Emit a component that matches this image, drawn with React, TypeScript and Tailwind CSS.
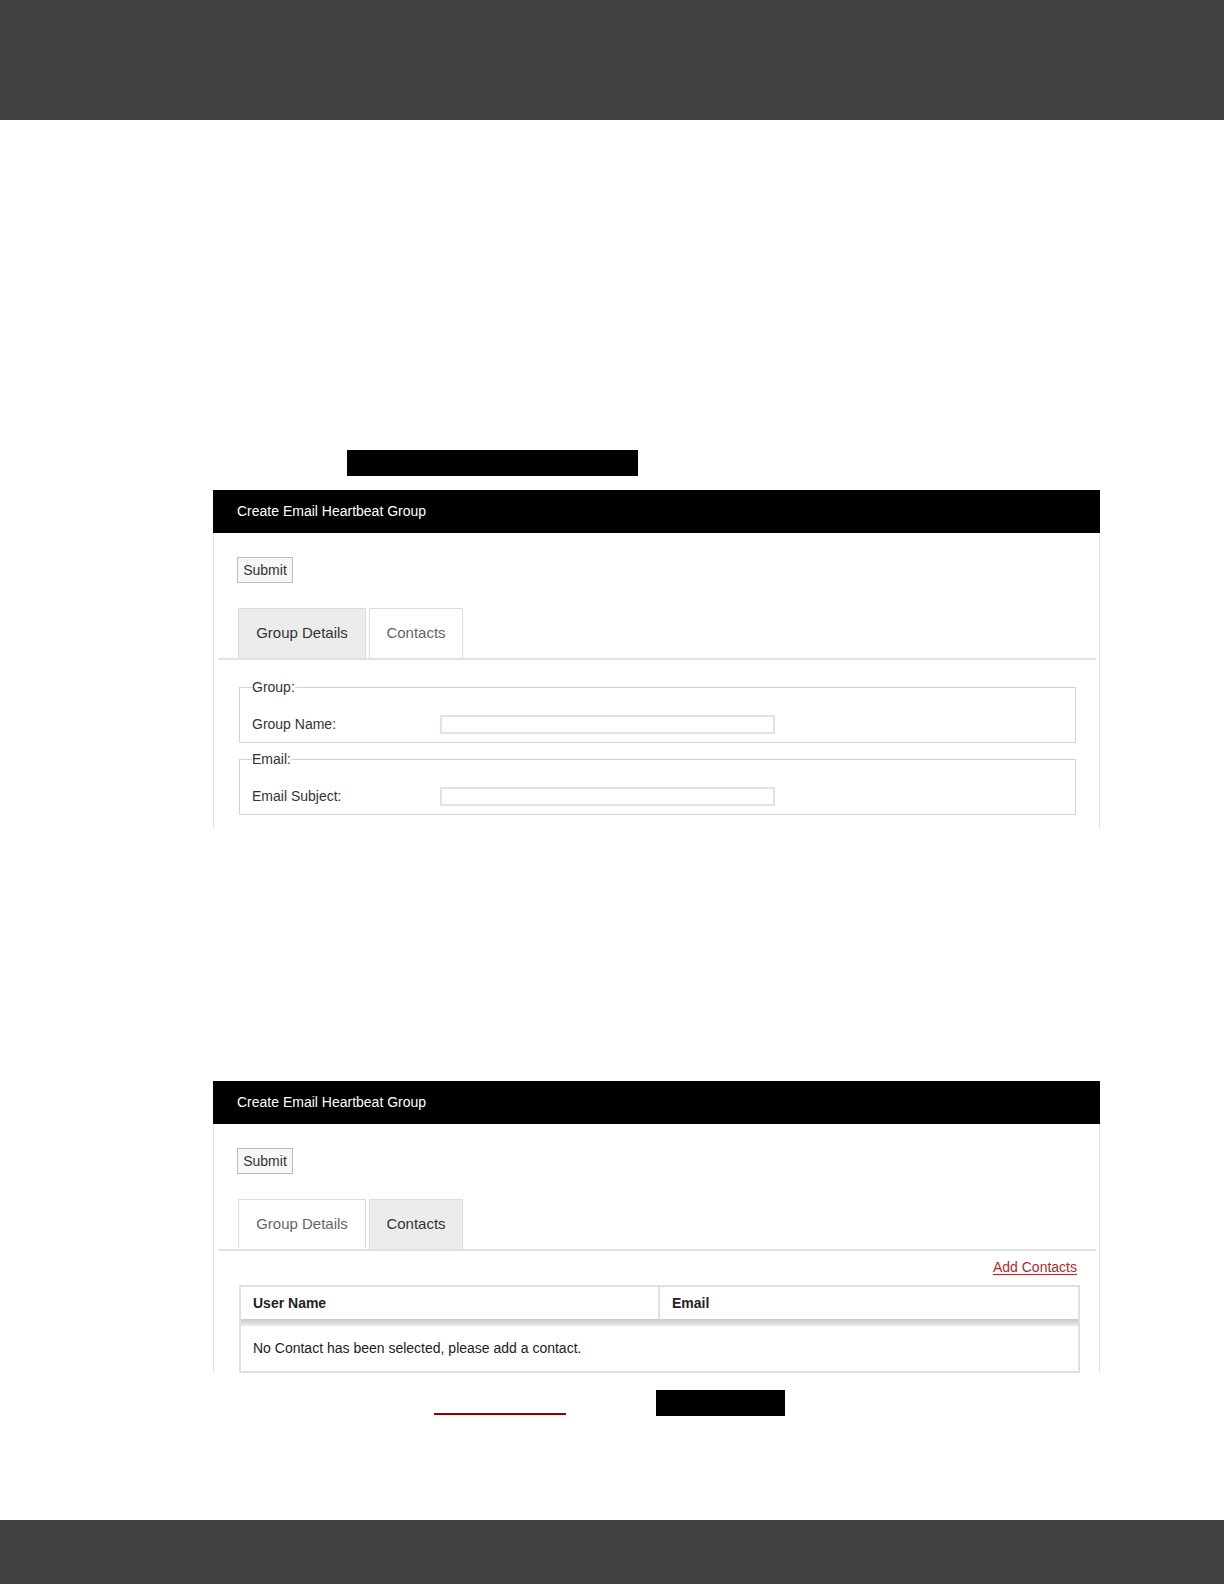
import React, { useState } from 'react';

type TabKey = 'details' | 'contacts';

const font = { fontFamily: '"Liberation Sans", Arial, sans-serif' };

const PanelHeader: React.FC = () => (
  <div className="h-[43px] bg-black text-white text-[14px] flex items-center px-[24px]">
    Create Email Heartbeat Group
  </div>
);

const SubmitButton: React.FC = () => (
  <button className="h-[26px] w-[56px] border border-[#bdbdbd] bg-[#f7f7f7] text-[14px] text-[#333] leading-none">
    Submit
  </button>
);

const Tabs: React.FC<{ active: TabKey; onChange: (t: TabKey) => void }> = ({ active, onChange }) => {
  const tabClass = (key: TabKey) =>
    key === active
      ? 'bg-[#ececec] text-[#333]'
      : 'bg-white text-[#666]';
  return (
    <div className="ml-[4px] mr-[3px] border-b-2 border-[#e2e2e2] pl-[20px] flex gap-[3px]">
      <button
        onClick={() => onChange('details')}
        className={`h-[50px] w-[128px] border border-b-0 border-[#dcdcdc] text-[15px] ${tabClass('details')}`}
      >
        Group Details
      </button>
      <button
        onClick={() => onChange('contacts')}
        className={`h-[50px] w-[94px] border border-b-0 border-[#dcdcdc] text-[15px] ${tabClass('contacts')}`}
      >
        Contacts
      </button>
    </div>
  );
};

const FieldGroup: React.FC<{ legend: string; label: string; className?: string }> = ({ legend, label, className }) => (
  <fieldset className={`ml-[25px] w-[837px] border border-[#d2d2d2] px-[12px] pb-[7px] ${className || ''}`}>
    <legend className="text-[14px] leading-[16px] text-[#333]">{legend}</legend>
    <div className="flex items-center mt-[19px]">
      <span className="w-[188px] text-[14px] text-[#333]">{label}</span>
      <input className="h-[19px] w-[335px] border-2 border-[#dfe1ee] bg-white outline-none" />
    </div>
  </fieldset>
);

const DetailsBody: React.FC = () => (
  <div className="pt-[19px] pb-[14px]">
    <FieldGroup legend="Group:" label="Group Name:" />
    <FieldGroup legend="Email:" label="Email Subject:" className="mt-[8px]" />
  </div>
);

const ContactsBody: React.FC = () => (
  <div>
    <div className="flex justify-end pr-[22px] pt-[8px] h-[34px]">
      <a href="#" className="text-[14px] leading-[16px] text-[#b02a2a] underline underline-offset-2">
        Add Contacts
      </a>
    </div>
    <div className="ml-[25px] w-[841px] border-2 border-[#e0e0e0] text-[14px] text-[#222]">
      <div className="flex h-[32px] items-center bg-white">
        <div className="w-[419px] h-full flex items-center px-[12px] font-bold border-r-2 border-[#e0e0e0]">User Name</div>
        <div className="flex-1 px-[12px] font-bold">Email</div>
      </div>
      <div className="h-[7px] bg-gradient-to-b from-[#c9c9c9] to-[#ececec]" />
      <div className="h-[45px] flex items-center px-[12px]">No Contact has been selected, please add a contact.</div>
    </div>
  </div>
);

const HeartbeatPanel: React.FC<{ initialTab: TabKey; className?: string }> = ({ initialTab, className }) => {
  const [tab, setTab] = useState<TabKey>(initialTab);
  return (
    <div className={`ml-[213px] w-[887px] ${className || ''}`}>
      <PanelHeader />
      <div className="border-x border-[#e3e3e3]">
        <div className="px-[23px] pt-[24px] pb-[25px]">
          <SubmitButton />
        </div>
        <Tabs active={tab} onChange={setTab} />
        {tab === 'details' ? <DetailsBody /> : <ContactsBody />}
      </div>
    </div>
  );
};

export default function App() {
  return (
    <div className="min-h-[1584px] bg-white flex flex-col" style={font}>
      <div className="h-[120px] bg-[#424242]" />

      <div className="ml-[347px] mt-[330px] h-[26px] w-[291px] bg-black" />

      <HeartbeatPanel initialTab="details" className="mt-[14px]" />

      <HeartbeatPanel initialTab="contacts" className="mt-[252px]" />

      <div className="mt-[17px] flex items-end h-[26px]">
        <div className="ml-[434px] mb-[1px] h-[2px] w-[132px] bg-[#8b0000]" />
        <div className="ml-[90px] h-[26px] w-[129px] bg-black" />
      </div>

      <div className="flex-1" />
      <div className="h-[64px] bg-[#424242]" />
    </div>
  );
}
